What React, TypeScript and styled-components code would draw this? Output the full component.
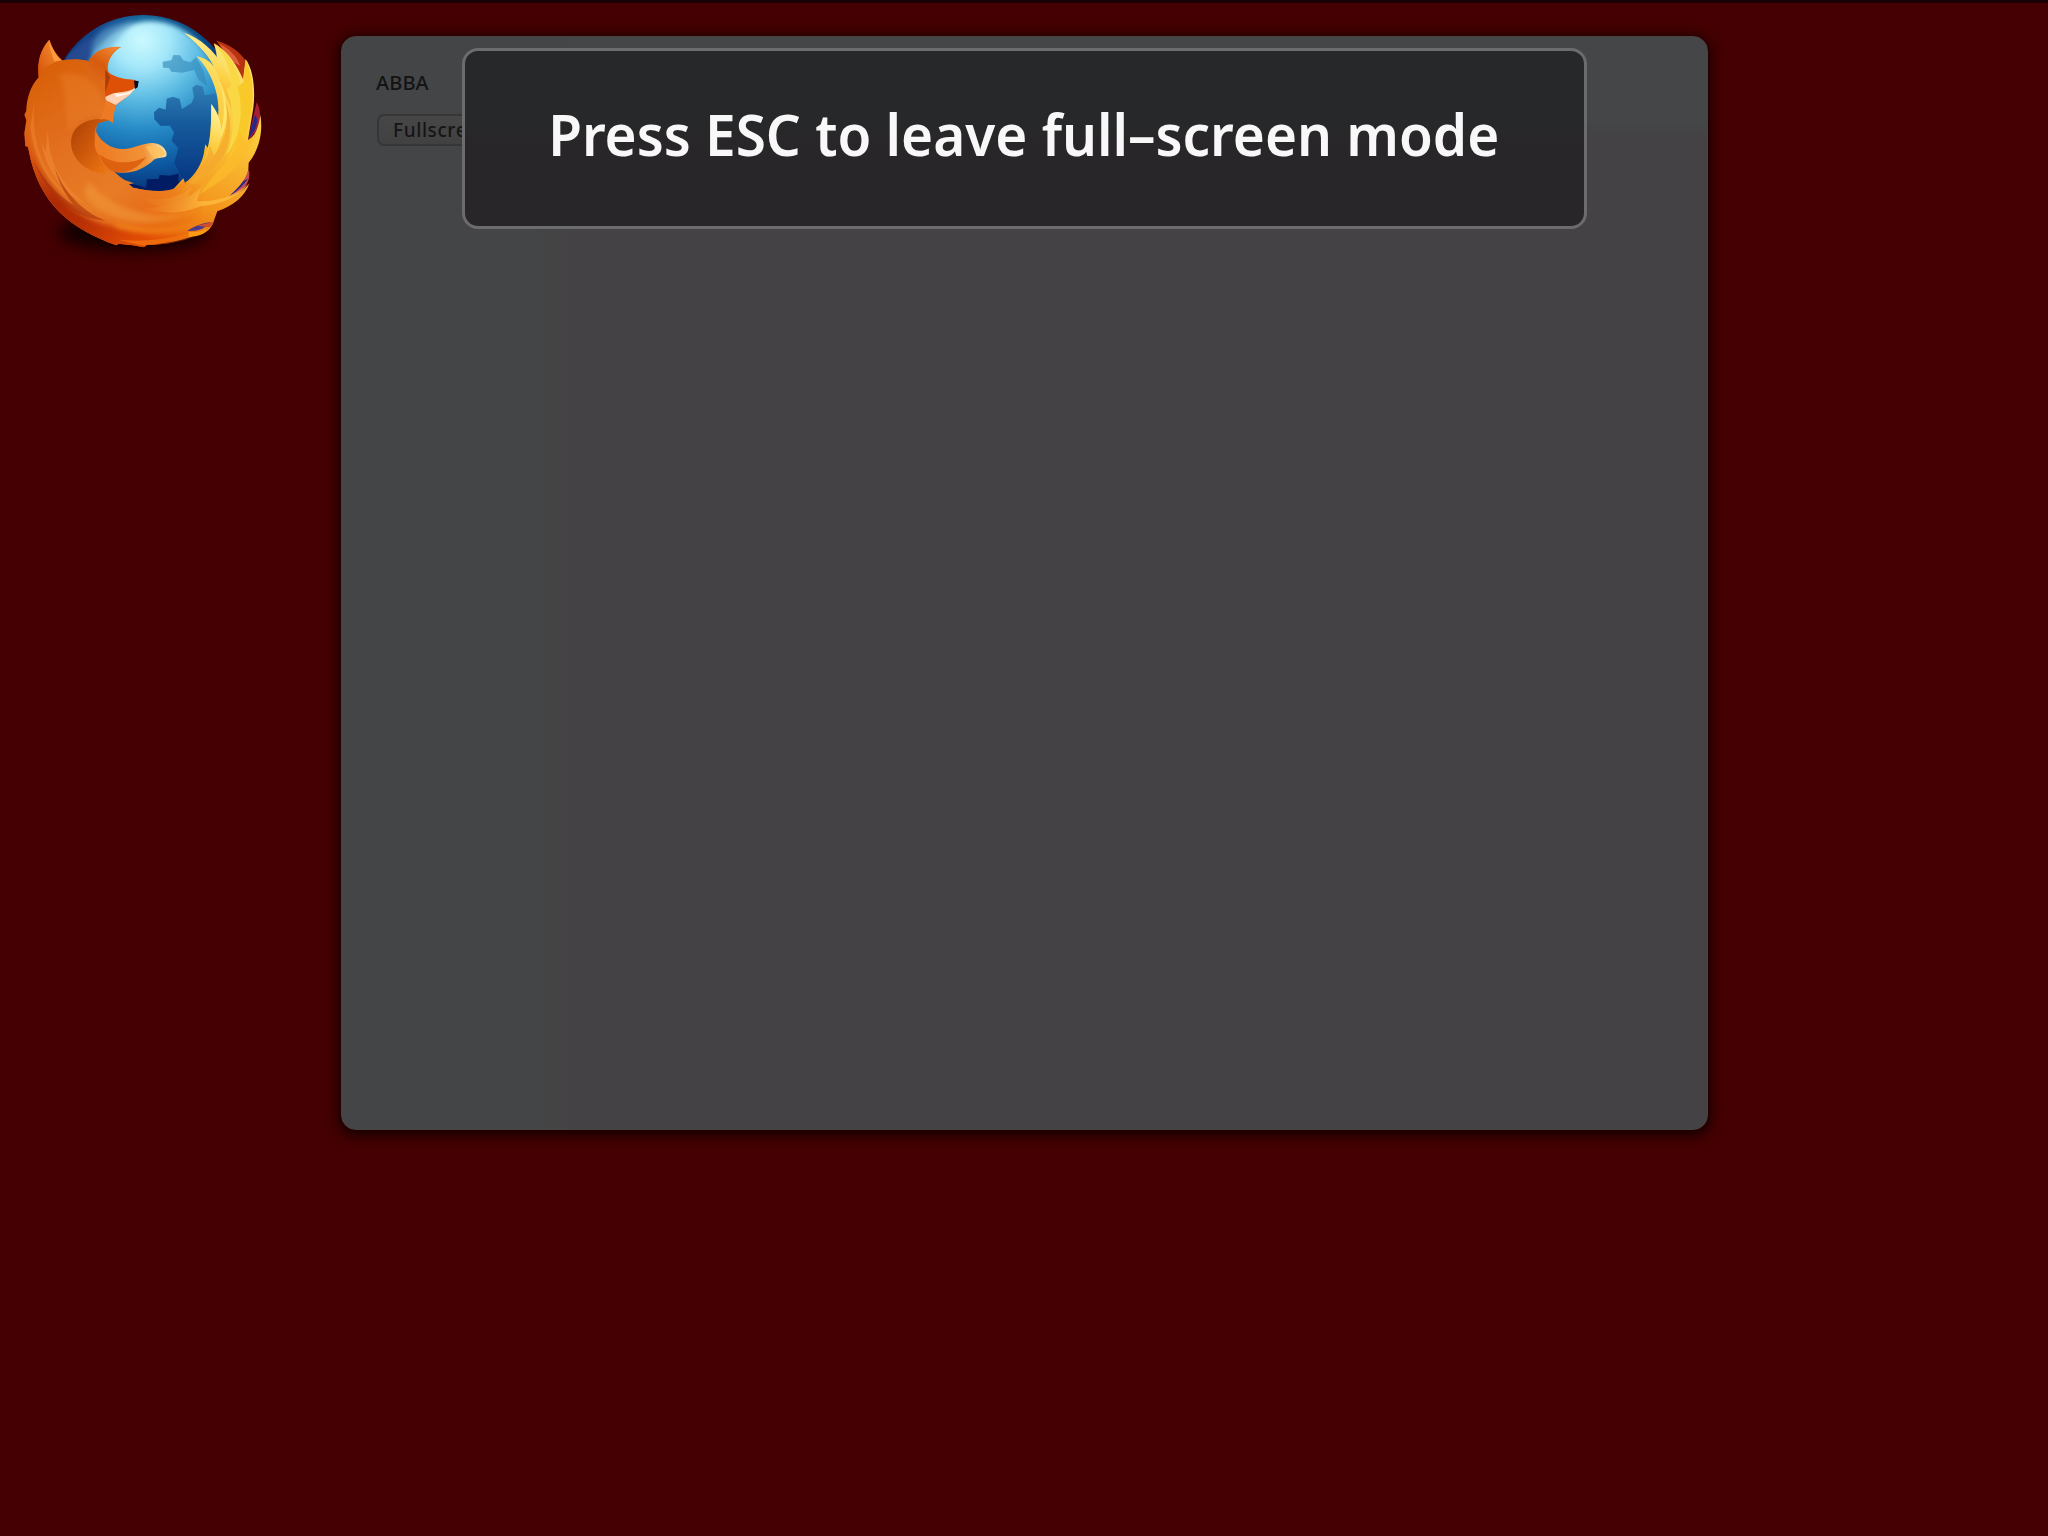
import React from "react";
import styled, { createGlobalStyle } from "styled-components";

const GlobalStyle = createGlobalStyle`
  * { box-sizing: border-box; }
  html, body { margin: 0; background: #440002; }
  body { font-family: "Noto Sans", "Open Sans", sans-serif; overflow: hidden; }
`;

const Screen = styled.main`
  display: grid;
  grid-template-columns: 341px 1367px 1fr;
  align-items: start;
  width: 2048px;
  height: 1536px;
  border-top: 3px solid #180006;
  background: #440002;
`;

const LogoArea = styled.div`
  margin-top: -3px;
  height: 270px;
`;

const Logo = styled.svg`
  display: block;
  width: 290px;
  height: 270px;

  filter {
    color-interpolation-filters: sRGB;
  }
`;

const Panel = styled.section`
  position: relative;
  display: flex;
  flex-direction: column;
  align-items: flex-start;
  gap: 10px;
  height: 1094px;
  margin-top: 33px;
  padding: 32px 34px;
  border-radius: 15px;
  border: 1px solid #474541;
  background:
    linear-gradient(90deg, #444546 0 190px, rgba(68, 69, 70, 0) 230px),
    linear-gradient(#444647 0 85px, #444244 98px);
  box-shadow: 0 3px 12px 3px rgba(12, 0, 0, 0.8);
`;

const PageTitle = styled.p`
  margin: 0;
  font-size: 20px;
  line-height: 28px;
  height: 35px;
  color: #131314;
  font-weight: 500;
  letter-spacing: 0.1px;
`;

const FullscreenButton = styled.button`
  width: 132px;
  height: 32px;
  margin-left: 1px;
  padding: 1px 0 0 14px;
  text-align: left;
  font: 500 19px/27px "Noto Sans", sans-serif;
  letter-spacing: 0.6px;
  color: #151516;
  border: 2px solid #363637;
  border-radius: 7px;
  background: linear-gradient(#474748, #414142);
`;

const Notice = styled.div`
  position: absolute;
  left: 120px;
  top: 11px;
  width: 1125px;
  height: 181px;
  padding: 0 2px 10px 0;
  display: flex;
  align-items: center;
  justify-content: center;
  border: 3px solid #6c6b6d;
  border-radius: 16px;
  background: linear-gradient(#272829 0, #272829 76px, #292629 90px);
`;

const NoticeText = styled.span`
  color: #f8f8f8;
  font-size: 58px;
  font-weight: 600;
  line-height: 80px;
  white-space: nowrap;
  transform: scaleX(0.946);
`;

function FirefoxLogo() {
  return (
    <Logo viewBox="0 0 870 810" role="img" aria-label="Firefox">
      <defs>
        <radialGradient id="globe" gradientUnits="userSpaceOnUse" cx="425" cy="120" r="480">
          <stop offset="0" stopColor="#cdfaff" />
          <stop offset=".17" stopColor="#a5e8fa" />
          <stop offset=".36" stopColor="#5fbde4" />
          <stop offset=".56" stopColor="#268bc6" />
          <stop offset=".78" stopColor="#0d5aa3" />
          <stop offset="1" stopColor="#06276b" />
        </radialGradient>
        <linearGradient id="rim" x1="0" y1="0" x2="1" y2="0">
          <stop offset="0" stopColor="#072a6b" />
          <stop offset=".3" stopColor="#174f93" />
          <stop offset=".5" stopColor="#15679a" />
          <stop offset="1" stopColor="#083573" />
        </linearGradient>
        <linearGradient id="land" x1="0" y1="0" x2="0" y2="1">
          <stop offset="0" stopColor="#317fb5" />
          <stop offset=".4" stopColor="#155b9c" />
          <stop offset="1" stopColor="#073682" />
        </linearGradient>
        <linearGradient id="body" gradientUnits="userSpaceOnUse" x1="130" y1="210" x2="500" y2="740">
          <stop offset="0" stopColor="#d96009" />
          <stop offset=".35" stopColor="#e27020" />
          <stop offset=".65" stopColor="#e87c26" />
          <stop offset="1" stopColor="#e65b0c" />
        </linearGradient>
        <linearGradient id="flame" gradientUnits="userSpaceOnUse" x1="720" y1="200" x2="490" y2="720">
          <stop offset="0" stopColor="#fbe26b" />
          <stop offset=".35" stopColor="#fbc637" />
          <stop offset=".7" stopColor="#f49b20" />
          <stop offset="1" stopColor="#e96b0b" />
        </linearGradient>
        <linearGradient id="tail" gradientUnits="userSpaceOnUse" x1="310" y1="490" x2="500" y2="455">
          <stop offset="0" stopColor="#ed7c24" />
          <stop offset=".65" stopColor="#f19237" />
          <stop offset="1" stopColor="#ffe5a7" />
        </linearGradient>
        <linearGradient id="neck" x1="0" y1="0" x2="1" y2="1">
          <stop offset="0" stopColor="#a94005" />
          <stop offset=".5" stopColor="#cf590b" />
          <stop offset="1" stopColor="#ef7a13" />
        </linearGradient>
        <linearGradient id="ear" x1="1" y1="0" x2="0" y2="1">
          <stop offset="0" stopColor="#fa9739" />
          <stop offset="1" stopColor="#d55007" />
        </linearGradient>
        <linearGradient id="frontEar" gradientUnits="userSpaceOnUse" x1="345" y1="140" x2="285" y2="235">
          <stop offset="0" stopColor="#f18734" />
          <stop offset=".6" stopColor="#d75b0c" />
          <stop offset="1" stopColor="#dd681a" />
        </linearGradient>
        <linearGradient id="crimson" gradientUnits="userSpaceOnUse" x1="90" y1="430" x2="400" y2="720">
          <stop offset="0" stopColor="#dc5a13" />
          <stop offset=".4" stopColor="#ae2a04" />
          <stop offset=".65" stopColor="#b92f04" />
          <stop offset="1" stopColor="#df4a05" />
        </linearGradient>
        <linearGradient id="gold" x1=".5" y1="0" x2=".3" y2="1">
          <stop offset="0" stopColor="#fff3a0" />
          <stop offset=".5" stopColor="#fcd144" />
          <stop offset="1" stopColor="#f4a32a" />
        </linearGradient>
        <linearGradient id="fade" gradientUnits="userSpaceOnUse" x1="420" y1="0" x2="610" y2="0">
          <stop offset="0" stopColor="#fff" />
          <stop offset="1" stopColor="#000" />
        </linearGradient>
        <mask id="bodyMask" maskUnits="userSpaceOnUse" x="0" y="0" width="870" height="810">
          <rect width="870" height="810" fill="url(#fade)" />
        </mask>
        <filter id="shade" x="-30%" y="-80%" width="160%" height="260%"><feGaussianBlur stdDeviation="20" /></filter>
        <filter id="soft" x="-20%" y="-20%" width="140%" height="140%"><feGaussianBlur stdDeviation="8" /></filter>
        <filter id="fine" x="-10%" y="-10%" width="120%" height="120%"><feGaussianBlur stdDeviation="2.2" /></filter>
        <clipPath id="disc"><circle cx="430" cy="324" r="276" /></clipPath>
        <clipPath id="foxClip"><path d="M148 119C157 145 170 166 186 181C212 176 242 176 267 183C278 157 315 139 363 141C330 160 318 192 326 219C345 237 382 239 406 240L402 272Q380 291 348 316C341 333 340 350 339 369C322 354 299 357 291 374C285 399 291 425 303 450C312 482 338 517 374 540L402 550L400 563C450 575 498 577 523 565L655 655L635 682C595 714 530 733 440 735L432 742L398 736L355 731L350 736C285 713 223 680 180 638C130 589 99 521 87 455L84 441L76 438L73 400L79 361L73 344L79 332C80 296 91 259 116 232C112 181 122 149 148 119Z" /></clipPath>
      </defs>

      <ellipse cx="400" cy="697" rx="225" ry="56" fill="#100000" opacity=".92" filter="url(#shade)" />
      <g filter="url(#fine)">
        <circle cx="430" cy="324" r="279" fill="url(#rim)" />
        <g clipPath="url(#disc)">
          <ellipse cx="452" cy="331" rx="222" ry="268" fill="url(#globe)" filter="url(#soft)" />
          <path d="M190 165L335 70L280 108L272 170L245 190L190 190Z" fill="#34529b" opacity=".65" filter="url(#soft)" />
          <path d="M276 165C268 128 292 93 340 76L405 60L330 145L286 204Z" fill="#6aaad2" opacity=".6" filter="url(#soft)" />
          <path d="M488 185L514 181L520 165L540 166L550 181L572 187L588 171L610 210L622 259L594 238L583 210L547 218L514 215L507 204L489 203Z" fill="#3188b8" opacity=".6" filter="url(#fine)" />
          <path d="M462 337L477 323L497 329L500 296L519 290L539 297L546 327L575 309L582 291L577 263L589 254L609 260L614 286L651 280L675 410L615 520L552 545L523 488L535 444L515 422L522 397L509 377L482 378L463 358Z" fill="url(#land)" filter="url(#fine)" />
          <path d="M385 548L439 563L440 538L476 537L479 525L508 527L536 521L535 544L580 550L565 600L385 594Z" fill="#021c63" />
        </g>

        <path d="M649 122C690 132 722 158 737 182L733 248L707 207Z" fill="#b93310" />
        <path d="M657 131C686 144 713 171 720 197L696 184Z" fill="#dc6038" />
        <path d="M770 307C784 332 785 369 768 394L745 421L757 363Z" fill="#a72135" />
        <path d="M765 345Q778 360 764 390L744 419L756 376Z" fill="#28268a" />
        <path d="M747 510C752 538 741 563 704 587L686 588Z" fill="#c54b56" />
        <path d="M744 536C729 558 705 577 688 589L716 550Z" fill="#292b83" />

        <path d="M554 98C594 128 622 168 650 192C652 176 650 155 641 130C685 152 712 200 729 238L737 178C762 212 766 275 760 324L744 420C760 412 774 395 781 345C790 395 777 451 746 488L745 510C735 545 708 570 686 590C710 585 735 570 748 550C735 589 702 617 652 634L637 675C589 717 513 729 437 735L350 730L346 596L402 563C448 574 493 577 521 566L550 535L555 548C588 527 606 486 611 463L616 433L626 447C635 396 632 344 634 312L654 350C662 281 630 210 590 169C616 174 632 187 642 200C626 157 588 124 554 98Z" fill="url(#flame)" />
        <path d="M552 98C600 113 643 153 671 199C699 244 702 284 695 328C682 292 664 262 652 218C636 184 611 144 552 98Z" fill="url(#gold)" />
        <path d="M591 170C635 187 664 239 670 295C676 352 665 404 645 443C673 408 681 365 681 329C675 263 645 197 591 170Z" fill="#ffe56a" />
        <path d="M643 130C693 162 727 226 725 293C729 360 711 425 678 467C708 397 703 326 678 268L693 259C691 206 676 164 643 130Z" fill="#fad745" />
        <path d="M737 178C764 237 762 310 746 368C736 419 704 464 679 485C727 403 731 318 712 262L730 247Z" fill="#f9c929" />
        <path d="M634 312C658 342 670 382 661 421C653 467 615 505 590 527C630 461 636 386 634 312Z" fill="url(#gold)" />
        <path d="M676 304C700 368 696 446 652 491C622 524 586 558 542 573C599 523 626 477 629 435L642 467C681 415 688 359 676 304Z" fill="#f4a82e" opacity=".72" />
        <path d="M768 399C749 466 695 519 653 548L597 584L650 516C692 481 713 429 719 392C730 425 740 436 768 399Z" fill="#fcbc2b" opacity=".7" />
        <path d="M746 552C711 597 651 614 600 619C547 643 482 642 422 625C494 624 559 603 603 563L591 603C649 607 697 590 746 552Z" fill="#ffc044" opacity=".7" />
        <path d="M615 540C610 574 575 609 538 619C501 629 457 617 428 594C489 605 546 590 577 558L563 591C588 582 606 563 615 540Z" fill="#f6ae38" opacity=".8" />

        <g mask="url(#bodyMask)">
          <path d="M148 119C157 145 170 166 186 181C212 176 242 176 267 183C278 157 315 139 363 141C330 160 318 192 326 219C345 237 382 239 406 240L402 272Q380 291 348 316C341 333 340 350 339 369C322 354 299 357 291 374C285 399 291 425 303 450C312 482 338 517 374 540L402 550L387 553L400 563C450 575 498 577 523 565L550 545L630 560L655 655L635 682C595 714 530 733 440 735L432 742L398 736L355 731L350 736C285 713 223 680 180 638C130 589 99 521 87 455L84 441L76 438L73 400L79 361L73 344L79 332C80 296 91 259 116 232C112 181 122 149 148 119Z" fill="url(#body)" />

          <g clipPath="url(#foxClip)">
            <path d="M75 337C83 466 154 607 283 662C382 704 532 697 650 635L620 750L355 760L161 679L68 542Z" fill="url(#crimson)" filter="url(#soft)" />
            <path d="M104 302C90 428 134 533 219 600C145 556 101 472 91 380Z" fill="#ee842b" opacity=".55" />
            <path d="M145 377C139 465 176 553 263 614C183 582 133 497 124 423L137 455Z" fill="#f08932" opacity=".6" />
            <path d="M103 486C136 550 178 590 220 614C190 576 176 546 163 499C189 575 245 635 317 662C272 660 220 638 183 606C139 565 117 523 103 486Z" fill="#a83108" opacity=".58" />
            <path d="M265 543C337 630 462 672 602 621C526 682 413 681 333 648C297 631 267 607 252 582Z" fill="#ef9235" opacity=".72" filter="url(#soft)" />
            <path d="M347 667C448 696 550 681 638 643L600 681C520 711 421 705 347 681Z" fill="#f08218" filter="url(#soft)" />
            <path d="M356 719C459 730 550 709 632 679L602 712L435 739Z" fill="#f16b0d" />
            <path d="M173 223C197 215 232 217 269 238C304 266 305 308 342 340L331 356C287 337 232 351 210 398C189 340 201 266 173 223Z" fill="#ef8631" opacity=".34" filter="url(#soft)" />
          </g>
        </g>

        <path d="M330 360C285 350 235 363 218 401C200 448 234 500 287 516C340 529 315 507 304 476C284 434 276 392 295 370Z" fill="url(#neck)" filter="url(#fine)" />
        <path d="M289 396C302 426 335 449 374 447C405 444 426 430 458 429C487 430 504 454 499 468C492 475 475 472 463 478C437 505 398 522 359 518C329 515 302 490 298 467C281 448 281 421 289 396Z" fill="url(#tail)" />
        <path d="M299 464C343 493 389 494 439 471C409 512 365 527 334 512C318 503 304 483 299 464Z" fill="#d85809" opacity=".78" />
        <path d="M437 441C461 432 485 439 498 463Q480 467 464 478Q449 458 437 441Z" fill="#ffc15e" opacity=".75" />

        <path d="M148 119C157 147 170 167 186 181C154 187 130 204 116 232C110 182 122 149 148 119Z" fill="url(#ear)" />
        <path d="M148 124C156 149 170 169 184 181L163 184C153 158 148 139 148 124Z" fill="#ff9b3e" />
        <path d="M267 183C282 151 322 137 363 141C326 158 314 193 318 231C306 255 282 242 262 220Z" fill="url(#frontEar)" />
        <path d="M316 207C332 230 372 240 407 240L404 264C372 284 344 285 316 291Z" fill="#dd5005" />
        <path d="M316 207L330 232L316 278Z" fill="#ac3d06" />
        <path d="M316 291C346 270 376 282 406 263C396 285 365 300 347 315Q330 306 318 302Z" fill="#ffd1b2" />
        <path d="M342 280Q376 286 405 266L389 281L350 291Z" fill="#fff5ec" />
        <path d="M402 242L416 243L413 262L405 267Z" fill="#130b18" />
        <path d="M317 299Q339 314 348 319Q340 339 339 369Q321 353 300 359Q312 337 317 299Z" fill="#ee7b24" />

        <path d="M562 693Q590 672 633 666Q608 696 562 693Z" fill="#4a398d" />
        <path d="M590 677L642 665L631 682Z" fill="#d24e2c" />
        <path d="M566 695Q611 700 636 676Q618 709 566 711Z" fill="#ff9a15" />
      </g>
    </Logo>
  );
}

export default function App() {
  return (
    <>
      <GlobalStyle />
      <Screen>
        <LogoArea>
          <FirefoxLogo />
        </LogoArea>
        <Panel>
          <PageTitle>ABBA</PageTitle>
          <FullscreenButton>Fullscreen</FullscreenButton>
          <Notice role="status">
            <NoticeText>Press ESC to leave full–screen mode</NoticeText>
          </Notice>
        </Panel>
      </Screen>
    </>
  );
}
